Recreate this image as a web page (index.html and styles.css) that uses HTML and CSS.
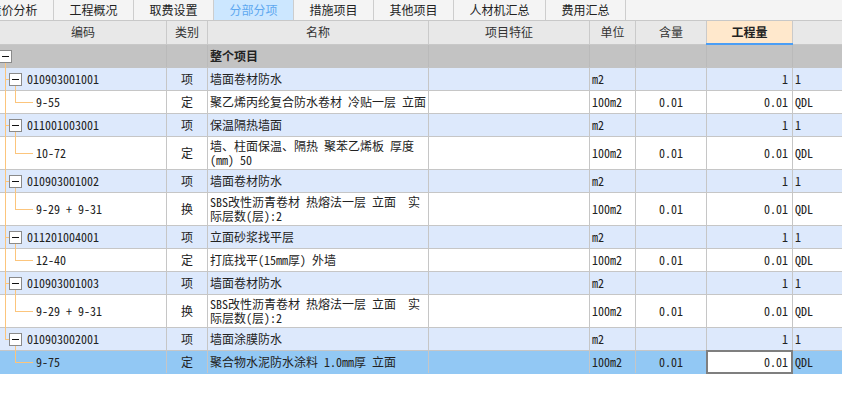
FILE: index.html
```html
<!DOCTYPE html>
<html lang="zh-CN">
<head>
<meta charset="utf-8">
<title>分部分项</title>
<link rel="stylesheet" href="styles.css">
</head>
<body>
<div class="tabs">
  <div class="tab first">造价分析</div>
  <div class="tab">工程概况</div>
  <div class="tab">取费设置</div>
  <div class="tab on">分部分项</div>
  <div class="tab">措施项目</div>
  <div class="tab">其他项目</div>
  <div class="tab wide">人材机汇总</div>
  <div class="tab">费用汇总</div>
</div>
<div class="grid">
  <div class="row head">
    <div class="c ctr">编码</div>
    <div class="c ctr">类别</div>
    <div class="c ctr">名称</div>
    <div class="c ctr">项目特征</div>
    <div class="c ctr">单位</div>
    <div class="c ctr">含量</div>
    <div class="c ctr hq">工程量</div>
    <div class="c last"></div>
  </div>

  <div class="row root">
    <div class="c code rootc"><span class="ln v0r"></span><span class="tog"></span></div>
    <div class="c"></div>
    <div class="c b">整个项目</div>
    <div class="c"></div>
    <div class="c"></div>
    <div class="c"></div>
    <div class="c"></div>
    <div class="c last"></div>
  </div>

  <div class="row blue">
    <div class="c code"><span class="ln v0"></span><span class="ln h0"></span><span class="ln v1d"></span><span class="tog"></span>010903001001</div>
    <div class="c ctr">项</div>
    <div class="c">墙面卷材防水</div>
    <div class="c"></div>
    <div class="c">m2</div>
    <div class="c"></div>
    <div class="c r">1</div>
    <div class="c last">1</div>
  </div>
  <div class="row">
    <div class="c code kid"><span class="ln v0"></span><span class="ln v1u"></span><span class="ln h1"></span>9-55</div>
    <div class="c ctr">定</div>
    <div class="c">聚乙烯丙纶复合防水卷材 冷贴一层 立面</div>
    <div class="c"></div>
    <div class="c">100m2</div>
    <div class="c ctr">0.01</div>
    <div class="c r">0.01</div>
    <div class="c last">QDL</div>
  </div>

  <div class="row blue">
    <div class="c code"><span class="ln v0"></span><span class="ln h0"></span><span class="ln v1d"></span><span class="tog"></span>011001003001</div>
    <div class="c ctr">项</div>
    <div class="c">保温隔热墙面</div>
    <div class="c"></div>
    <div class="c">m2</div>
    <div class="c"></div>
    <div class="c r">1</div>
    <div class="c last">1</div>
  </div>
  <div class="row tall">
    <div class="c code kid"><span class="ln v0"></span><span class="ln v1u"></span><span class="ln h1"></span>10-72</div>
    <div class="c ctr">定</div>
    <div class="c two">墙、柱面保温、隔热 聚苯乙烯板 厚度<br>(mm) 50</div>
    <div class="c"></div>
    <div class="c">100m2</div>
    <div class="c ctr">0.01</div>
    <div class="c r">0.01</div>
    <div class="c last">QDL</div>
  </div>

  <div class="row blue">
    <div class="c code"><span class="ln v0"></span><span class="ln h0"></span><span class="ln v1d"></span><span class="tog"></span>010903001002</div>
    <div class="c ctr">项</div>
    <div class="c">墙面卷材防水</div>
    <div class="c"></div>
    <div class="c">m2</div>
    <div class="c"></div>
    <div class="c r">1</div>
    <div class="c last">1</div>
  </div>
  <div class="row tall">
    <div class="c code kid"><span class="ln v0"></span><span class="ln v1u"></span><span class="ln h1"></span>9-29 + 9-31</div>
    <div class="c ctr">换</div>
    <div class="c two">SBS改性沥青卷材 热熔法一层 立面&nbsp; 实<br>际层数(层):2</div>
    <div class="c"></div>
    <div class="c">100m2</div>
    <div class="c ctr">0.01</div>
    <div class="c r">0.01</div>
    <div class="c last">QDL</div>
  </div>

  <div class="row blue">
    <div class="c code"><span class="ln v0"></span><span class="ln h0"></span><span class="ln v1d"></span><span class="tog"></span>011201004001</div>
    <div class="c ctr">项</div>
    <div class="c">立面砂浆找平层</div>
    <div class="c"></div>
    <div class="c">m2</div>
    <div class="c"></div>
    <div class="c r">1</div>
    <div class="c last">1</div>
  </div>
  <div class="row">
    <div class="c code kid"><span class="ln v0"></span><span class="ln v1u"></span><span class="ln h1"></span>12-40</div>
    <div class="c ctr">定</div>
    <div class="c">打底找平(15mm厚) 外墙</div>
    <div class="c"></div>
    <div class="c">100m2</div>
    <div class="c ctr">0.01</div>
    <div class="c r">0.01</div>
    <div class="c last">QDL</div>
  </div>

  <div class="row blue">
    <div class="c code"><span class="ln v0"></span><span class="ln h0"></span><span class="ln v1d"></span><span class="tog"></span>010903001003</div>
    <div class="c ctr">项</div>
    <div class="c">墙面卷材防水</div>
    <div class="c"></div>
    <div class="c">m2</div>
    <div class="c"></div>
    <div class="c r">1</div>
    <div class="c last">1</div>
  </div>
  <div class="row tall">
    <div class="c code kid"><span class="ln v0"></span><span class="ln v1u"></span><span class="ln h1"></span>9-29 + 9-31</div>
    <div class="c ctr">换</div>
    <div class="c two">SBS改性沥青卷材 热熔法一层 立面&nbsp; 实<br>际层数(层):2</div>
    <div class="c"></div>
    <div class="c">100m2</div>
    <div class="c ctr">0.01</div>
    <div class="c r">0.01</div>
    <div class="c last">QDL</div>
  </div>

  <div class="row blue">
    <div class="c code"><span class="ln v0 half"></span><span class="ln h0"></span><span class="ln v1d"></span><span class="tog"></span>010903002001</div>
    <div class="c ctr">项</div>
    <div class="c">墙面涂膜防水</div>
    <div class="c"></div>
    <div class="c">m2</div>
    <div class="c"></div>
    <div class="c r">1</div>
    <div class="c last">1</div>
  </div>
  <div class="row sel">
    <div class="c code kid"><span class="ln v1u"></span><span class="ln h1"></span>9-75</div>
    <div class="c ctr">定</div>
    <div class="c">聚合物水泥防水涂料 1.0mm厚 立面</div>
    <div class="c"></div>
    <div class="c">100m2</div>
    <div class="c ctr">0.01</div>
    <div class="c r cur">0.01</div>
    <div class="c last">QDL</div>
  </div>
</div>
</body>
</html>
```

FILE: styles.css
```css
* {
  box-sizing: border-box;
}

body {
  margin: 0;
  background: #ffffff;
  font-family: "Noto Sans CJK SC", "Noto Sans", sans-serif;
  font-size: 12px;
  color: #222222;
  overflow: hidden;
}

/* ---------- tab strip ---------- */
.tabs {
  display: flex;
  height: 21px;
  background: #f4f4f4;
  border-bottom: 1px solid #c8c8c8;
  overflow: hidden;
}

.tab {
  flex: none;
  width: 80px;
  display: flex;
  align-items: center;
  justify-content: center;
  border-right: 1px solid #cdcdcd;
  color: #222222;
  font-size: 12px;
  line-height: 1;
  padding-bottom: 1px;
}

.tab.first {
  margin-left: -26px;
}

.tab.wide {
  width: 92px;
}

.tab.on {
  background: #cce7ff;
  color: #5ea7f0;
}

/* ---------- grid ---------- */
.row {
  display: grid;
  grid-template-columns: 167px 41px 221px 161px 46px 71px 86px 1fr;
  height: 23px;
  border-bottom: 1px solid #c6c6c6;
  font-family: "Noto Sans Mono CJK SC", "Noto Sans CJK SC", "DejaVu Sans Mono", monospace;
  font-size: 12px;
}

.row.tall {
  height: 33px;
}

.c {
  position: relative;
  display: flex;
  align-items: center;
  padding: 0 2px;
  border-right: 1px solid #c6c6c6;
  white-space: nowrap;
  line-height: 14px;
}

.c.last {
  border-right: none;
}

.ctr {
  justify-content: center;
}

.r {
  justify-content: flex-end;
  padding-right: 4px;
}

.b {
  font-weight: bold;
  font-family: "Noto Sans CJK SC", sans-serif;
}

.two {
  line-height: 14px;
}

/* header */
.row.head {
  height: 24px;
  background: #e8e8e8;
  border-bottom-color: #c8c8c8;
  font-family: "Noto Sans CJK SC", sans-serif;
  color: #333333;
}

.head .c {
  border-right-color: #cacaca;
  padding-bottom: 1px;
}

.hq {
  background: #ffe8cc;
  font-weight: bold;
  color: #222222;
}

.hq::after {
  content: "";
  position: absolute;
  left: -1px;
  right: -1px;
  bottom: -1px;
  height: 2px;
  background: #4b9ef5;
}

/* row colours */
.row.root {
  background: #c3c3c3;
  border-bottom-color: #c3c3c3;
}

.root .c {
  border-right-color: #bababa;
}

.row.blue {
  background: #dde9fc;
}

.row.sel {
  background: #92c8f4;
  border-bottom-color: #92c8f4;
}

.cur {
  background: #ffffff;
}

.cur::after {
  content: "";
  position: absolute;
  left: -1px;
  top: -1px;
  right: -1px;
  bottom: -1px;
  border: 2px solid #7f7f7f;
}

/* ---------- tree ---------- */
.code {
  padding-left: 9px;
  color: #222222;
}

.code.kid {
  padding-left: 36px;
}

.code.rootc {
  padding-left: 0;
}

.tog {
  flex: none;
  position: relative;
  width: 13px;
  height: 13px;
  margin-right: 5px;
  border: 1px solid #8a8a8a;
  background: #ffffff;
}

.rootc .tog {
  margin-left: -1px;
}

.tog::after {
  content: "";
  position: absolute;
  left: 2px;
  right: 2px;
  top: 5px;
  height: 1px;
  background: #111111;
}

.ln {
  position: absolute;
  background: #fcc57c;
}

.v0 {
  left: 5px;
  width: 1px;
  top: 0;
  bottom: -1px;
}

.v0.half {
  bottom: auto;
  height: calc(50% + 1px);
}

.v0r {
  left: 5px;
  width: 1px;
  top: calc(50% + 7px);
  bottom: -1px;
}

.h0 {
  left: 5px;
  width: 4px;
  top: 50%;
  height: 1px;
}

.v1d {
  left: 15px;
  width: 1px;
  top: calc(50% + 7px);
  bottom: -1px;
}

.v1u {
  left: 15px;
  width: 1px;
  top: 0;
  height: calc(50% + 1px);
}

.h1 {
  left: 15px;
  width: 18px;
  top: 50%;
  height: 1px;
}
```
